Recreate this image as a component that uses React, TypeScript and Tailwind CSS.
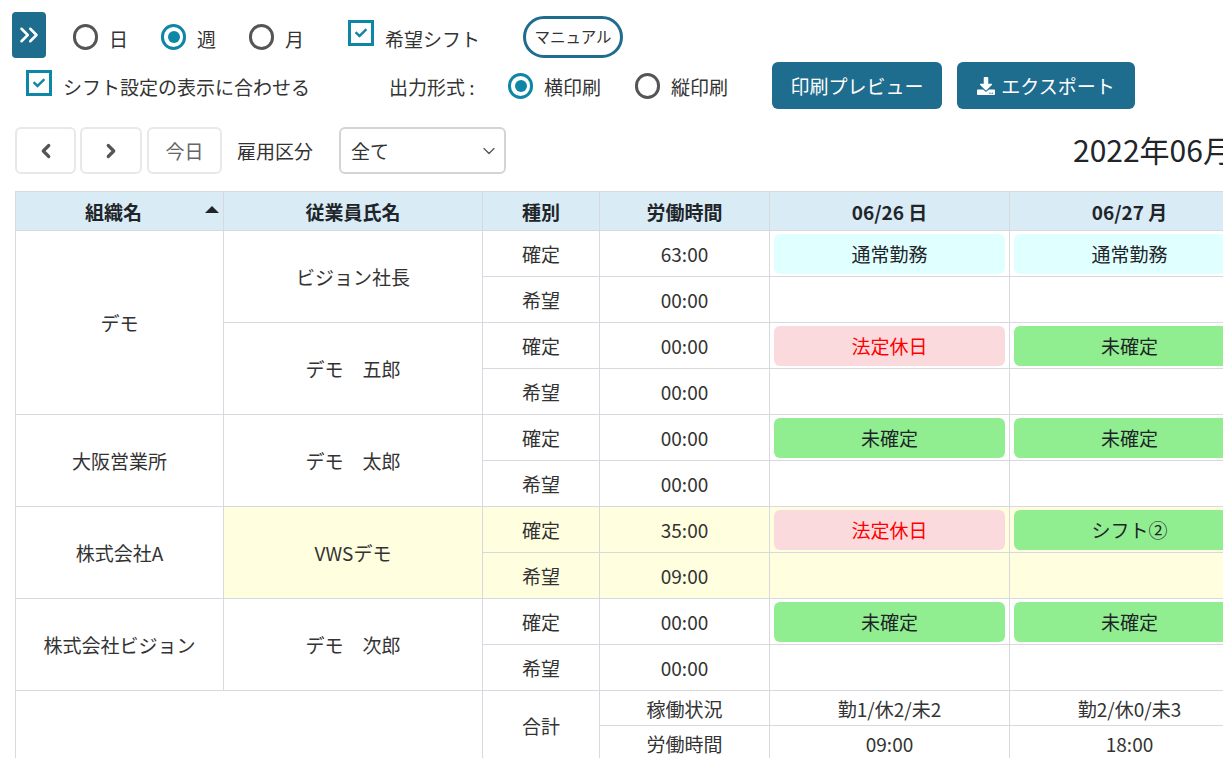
import { ChevronDown, ChevronLeft, ChevronRight, ChevronsRight } from 'lucide-react';
import { FaCheck, FaDownload } from 'react-icons/fa';

const FONT = '[font-family:"Noto_Sans_CJK_JP","Noto_Sans",sans-serif]';

type Shift = { label: string; kind: 'normal' | 'holiday' | 'pending' };

interface StaffRow {
  org?: string;
  orgSpan?: number;
  name: string;
  highlight?: boolean;
  confirmedHours: string;
  wishHours: string;
  shifts: [Shift, Shift];
}

const SHIFT_STYLES: Record<Shift['kind'], string> = {
  normal: 'bg-[#e0ffff] text-[#212529]',
  holiday: 'bg-[#fadadd] text-[#ff0000]',
  pending: 'bg-[#90ee90] text-[#212529]',
};

const NORMAL: Shift = { label: '通常勤務', kind: 'normal' };
const HOLIDAY: Shift = { label: '法定休日', kind: 'holiday' };
const PENDING: Shift = { label: '未確定', kind: 'pending' };

const ROWS: StaffRow[] = [
  { org: 'デモ', orgSpan: 4, name: 'ビジョン社長', confirmedHours: '63:00', wishHours: '00:00', shifts: [NORMAL, NORMAL] },
  { name: 'デモ　五郎', confirmedHours: '00:00', wishHours: '00:00', shifts: [HOLIDAY, PENDING] },
  { org: '大阪営業所', orgSpan: 2, name: 'デモ　太郎', confirmedHours: '00:00', wishHours: '00:00', shifts: [PENDING, PENDING] },
  { org: '株式会社A', orgSpan: 2, name: 'VWSデモ', highlight: true, confirmedHours: '35:00', wishHours: '09:00', shifts: [HOLIDAY, { label: 'シフト②', kind: 'pending' }] },
  { org: '株式会社ビジョン', orgSpan: 2, name: 'デモ　次郎', confirmedHours: '00:00', wishHours: '00:00', shifts: [PENDING, PENDING] },
];

const CELL = 'border border-[#d8d9de] text-center align-middle font-normal p-0';
const HEAD = 'border border-[#d8d9de] text-center align-middle font-semibold p-0';

function Radio({ label, checked, className }: { label: string; checked?: boolean; className?: string }) {
  return (
    <div className={`flex shrink-0 items-center gap-[11px] whitespace-nowrap ${className ?? ''}`}>
      {checked ? (
        <span className="flex h-[26px] w-[25px] items-center justify-center rounded-full border-[3px] border-[#0e86a6]">
          <span className="h-[12px] w-[12px] rounded-full bg-[#0e86a6]" />
        </span>
      ) : (
        <span className="h-[26px] w-[25px] rounded-full border-[3px] border-[#555555]" />
      )}
      <span className="translate-y-[1px]">{label}</span>
    </div>
  );
}

function Checkbox() {
  return (
    <span className="flex h-[26px] w-[26px] shrink-0 items-center justify-center border-[3px] border-[#0e86a6] bg-white text-[#0e86a6]">
      <FaCheck className="h-[12px] w-[12px]" />
    </span>
  );
}

function PagerButton({ children, className }: { children: React.ReactNode; className?: string }) {
  return (
    <button className={`flex h-[47px] shrink-0 items-center justify-center rounded-md border-2 border-[#e8e8e8] bg-white text-[#555555] ${className ?? ''}`}>
      {children}
    </button>
  );
}

function ShiftCell({ shift, highlight }: { shift: Shift; highlight?: boolean }) {
  return (
    <td className={`${CELL} px-[4px] py-[2px] ${highlight ? 'bg-[#ffffe0]' : ''}`}>
      <div className={`flex h-[40px] items-center justify-center rounded-md ${SHIFT_STYLES[shift.kind]}`}>{shift.label}</div>
    </td>
  );
}

export default function App() {
  return (
    <div className={`h-[758px] w-[1223px] overflow-hidden bg-white text-[19px] leading-none text-[#333333] ${FONT}`}>
      <div className="flex h-[62px] items-start pl-[12px] pt-[12px]">
        <button className="flex h-[46px] w-[34px] shrink-0 items-center justify-center rounded-[4px] bg-[#1f6d8e] text-white">
          <ChevronsRight className="h-[30px] w-[30px] shrink-0" strokeWidth={2} />
        </button>
        <div className="flex h-[50px] items-center">
          <Radio label="日" className="ml-[27px]" />
          <Radio label="週" checked className="ml-[33px]" />
          <Radio label="月" className="ml-[33px]" />
          <div className="ml-[44px] flex -translate-y-[4px] items-center gap-[11px] whitespace-nowrap">
            <Checkbox />
            <span className="translate-y-[5px]">希望シフト</span>
          </div>
          <span className="ml-[43px] flex h-[42px] w-[100px] shrink-0 items-center justify-center rounded-full border-[3px] border-[#1f6d8e] text-[15.5px]">
            マニュアル
          </span>
        </div>
      </div>

      <div className="flex h-[47px] items-center">
        <div className="ml-[26px] flex items-center gap-[11px] whitespace-nowrap">
          <span className="-translate-y-[3px]"><Checkbox /></span>
          <span className="translate-y-[1px]">シフト設定の表示に合わせる</span>
        </div>
        <span className="ml-[79px] w-[119px] shrink-0 translate-y-[1px]">出力形式 :</span>
        <Radio label="横印刷" checked />
        <Radio label="縦印刷" className="ml-[34px]" />
        <button className="ml-[44px] flex h-[47px] w-[170px] shrink-0 items-center justify-center rounded-md bg-[#1f6d8e] text-white">
          印刷プレビュー
        </button>
        <button className="ml-[15px] flex h-[47px] w-[178px] shrink-0 items-center justify-center gap-[6px] rounded-md bg-[#1f6d8e] text-white">
          <FaDownload className="h-[18px] w-[18px]" />
          エクスポート
        </button>
      </div>

      <div className="mt-[18px] flex h-[47px] items-center whitespace-nowrap pl-[15px]">
        <PagerButton className="w-[61px]"><ChevronLeft className="h-[22px] w-[22px]" strokeWidth={3.5} /></PagerButton>
        <PagerButton className="ml-[4px] w-[62px]"><ChevronRight className="h-[22px] w-[22px]" strokeWidth={3.5} /></PagerButton>
        <PagerButton className="ml-[5px] w-[75px] text-[#666666]">今日</PagerButton>
        <span className="ml-[15px] shrink-0">雇用区分</span>
        <div className="ml-[26px] flex h-[47px] w-[167px] shrink-0 items-center justify-between rounded-md border-2 border-[#d4d4d4] pl-[10px] pr-[5px]">
          <span>全て</span>
          <ChevronDown className="h-[20px] w-[20px] text-[#555555]" strokeWidth={1.5} />
        </div>
        <span className="ml-[567px] shrink-0 -translate-y-[2px] text-[30px] text-[#212529]">2022年06月</span>
      </div>

      <div className="ml-[15px] mt-[17px] w-[1234px]">
        <table className="w-[1234px] table-fixed border-collapse text-[#333333]">
          <colgroup>
            <col className="w-[208px]" />
            <col className="w-[259px]" />
            <col className="w-[117px]" />
            <col className="w-[170px]" />
            <col className="w-[240px]" />
            <col className="w-[240px]" />
          </colgroup>
          <thead>
            <tr className="h-[39px] bg-[#d9ebf5] text-[#212529]">
              <th className={HEAD}>
                <div className="flex items-center justify-between pl-[69px] pr-[4px]">
                  <span>組織名</span>
                  <span className="mb-[3px] h-0 w-0 border-x-[7px] border-b-[7px] border-x-transparent border-b-[#212529]" />
                </div>
              </th>
              <th className={HEAD}>従業員氏名</th>
              <th className={HEAD}>種別</th>
              <th className={HEAD}>労働時間</th>
              <th className={HEAD}>06/26 日</th>
              <th className={HEAD}>06/27 月</th>
            </tr>
          </thead>
          <tbody>
            {ROWS.map((row) => {
              const bg = row.highlight ? 'bg-[#ffffe0]' : '';
              return [
                <tr key={`${row.name}-confirmed`} className="h-[46px]">
                  {row.org && <td rowSpan={row.orgSpan} className={CELL}>{row.org}</td>}
                  <td rowSpan={2} className={`${CELL} ${bg}`}>{row.name}</td>
                  <td className={`${CELL} ${bg}`}>確定</td>
                  <td className={`${CELL} ${bg}`}>{row.confirmedHours}</td>
                  <ShiftCell shift={row.shifts[0]} highlight={row.highlight} />
                  <ShiftCell shift={row.shifts[1]} highlight={row.highlight} />
                </tr>,
                <tr key={`${row.name}-wish`} className="h-[46px]">
                  <td className={`${CELL} ${bg}`}>希望</td>
                  <td className={`${CELL} ${bg}`}>{row.wishHours}</td>
                  <td className={`${CELL} ${bg}`} />
                  <td className={`${CELL} ${bg}`} />
                </tr>,
              ];
            })}
            <tr className="h-[35px]">
              <td colSpan={2} rowSpan={2} className={CELL} />
              <td rowSpan={2} className={CELL}>合計</td>
              <td className={CELL}>稼働状況</td>
              <td className={CELL}>勤1/休2/未2</td>
              <td className={CELL}>勤2/休0/未3</td>
            </tr>
            <tr className="h-[35px]">
              <td className={CELL}>労働時間</td>
              <td className={CELL}>09:00</td>
              <td className={CELL}>18:00</td>
            </tr>
          </tbody>
        </table>
      </div>
    </div>
  );
}
